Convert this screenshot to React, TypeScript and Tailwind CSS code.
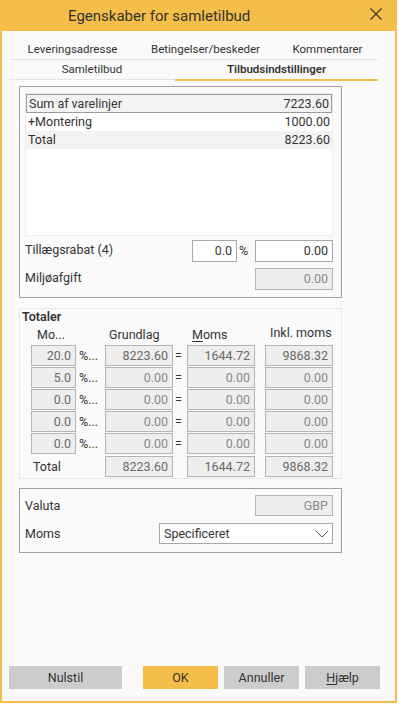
import type { ReactNode } from "react";

const font = { fontFamily: 'Roboto, "Noto Sans", sans-serif' };

function Field({
  value,
  width,
  disabled,
  dim,
}: {
  value: string;
  width: string;
  disabled?: boolean;
  dim?: boolean;
}) {
  return (
    <div
      className={`${width} h-full flex items-center justify-end pr-[4px] border ${
        disabled
          ? "bg-[#eeeeee] border-[#b4b4b4] " + (dim ? "text-[#8a8a8a]" : "text-[#6a6a6a]")
          : "bg-white border-[#a8a8a8] text-[#333]"
      }`}
    >
      {value}
    </div>
  );
}

function Panel({ className, children }: { className: string; children: ReactNode }) {
  return <div className={`ml-[17px] w-[323px] ${className}`}>{children}</div>;
}

const vatRows = [
  { pct: "20.0", base: "8223.60", vat: "1644.72", incl: "9868.32" },
  { pct: "5.0", base: "0.00", vat: "0.00", incl: "0.00" },
  { pct: "0.0", base: "0.00", vat: "0.00", incl: "0.00" },
  { pct: "0.0", base: "0.00", vat: "0.00", incl: "0.00" },
  { pct: "0.0", base: "0.00", vat: "0.00", incl: "0.00" },
];

export default function App() {
  return (
    <div className="w-[399px] h-[704px] bg-[#fafafa]" style={font}>
      <div className="w-[397px] h-[703px] flex flex-col border-x-2 border-b-2 border-[#f5be48] bg-[#fafafa] text-[12.5px] leading-[16px] text-[#333]">
        {/* Title bar */}
        <div className="h-[31px] -mx-[2px] bg-[#f5be48] flex items-center shrink-0">
          <div className="pl-[68px] flex-1 text-[15px] text-[#333]">Egenskaber for samletilbud</div>
          <svg width="12" height="12" viewBox="0 0 12 12" className="mr-[15px] -mt-[3px]">
            <path d="M0.5 0.5 L11.5 11.5 M11.5 0.5 L0.5 11.5" stroke="#333" strokeWidth="1.1" fill="none" />
          </svg>
        </div>

        {/* Tabs */}
        <div className="ml-[9px] w-[367px] h-[29px] pt-[10px] border-b border-[#e6e6e6] grid grid-cols-[123px_143px_1fr] text-center text-[11.5px]">
          <div>Leveringsadresse</div>
          <div>Betingelser/beskeder</div>
          <div>Kommentarer</div>
        </div>
        <div className="ml-[7px] w-[369px] h-[20px] border-b border-[#e6e6e6] grid grid-cols-[166px_1fr] text-center text-[11.5px]">
          <div className="pt-[1px]">Samletilbud</div>
          <div className="pt-[1px] font-semibold h-[21px] border-b-2 border-[#f5be48]">Tilbudsindstillinger</div>
        </div>

        {/* Panel 1 */}
        <Panel className="mt-[6px] h-[212px] border border-[#a0a0a0] pt-[6px] pl-[5px] pr-[8px]">
          <div className="h-[143px] w-[308px] bg-white border border-[#eeeeee]">
            <div className="h-[19px] flex items-center justify-between px-[2px] bg-[#f3f3f3] border border-[#9a9a9a]">
              <span>Sum af varelinjer</span>
              <span>7223.60</span>
            </div>
            <div className="h-[18px] flex items-center justify-between px-[2px]">
              <span>+Montering</span>
              <span>1000.00</span>
            </div>
            <div className="h-[18px] flex items-center justify-between px-[2px] bg-[#f3f3f3]">
              <span>Total</span>
              <span>8223.60</span>
            </div>
          </div>
          <div className="mt-[4px] h-[22px] flex items-center">
            <span className="w-[167px] -mt-[2px]">Tillægsrabat (4)</span>
            <Field value="0.0" width="w-[45px]" />
            <span className="w-[18px] pl-[2px]">%</span>
            <Field value="0.00" width="w-[78px]" />
          </div>
          <div className="mt-[6px] h-[22px] flex items-center">
            <span className="w-[230px] -mt-[2px]">Miljøafgift</span>
            <Field value="0.00" width="w-[78px]" disabled dim />
          </div>
        </Panel>

        {/* Panel 2 */}
        <Panel className="mt-[10px] h-[171px] border border-[#e8e8e8] pl-[2px]">
          <div className="font-semibold">Totaler</div>
          <div className="h-[20px] flex items-center ml-[9px]">
            <span className="w-[74px] pl-[6px]">Mo...</span>
            <span className="w-[82px] pl-[4px]">Grundlag</span>
            <span className="w-[78px] pl-[5px]">
              <span className="underline underline-offset-2">M</span>oms
            </span>
            <span className="w-[68px] pl-[5px] -mt-[4px]">Inkl. moms</span>
          </div>
          <div className="ml-[9px] flex flex-col gap-[1px]">
            {vatRows.map((r, i) => (
              <div key={i} className="h-[21px] flex items-center">
                <Field value={r.pct} width="w-[45px]" disabled />
                <span className="w-[29px] pl-[3px]">%...</span>
                <Field value={r.base} width="w-[68px]" disabled dim={i > 0} />
                <span className="w-[14px] pl-[2px]">=</span>
                <Field value={r.vat} width="w-[68px]" disabled dim={i > 0} />
                <span className="w-[10px]" />
                <Field value={r.incl} width="w-[68px]" disabled dim={i > 0} />
              </div>
            ))}
            <div className="h-[21px] mt-[1px] flex items-center">
              <span className="w-[74px] pl-[2px]">Total</span>
              <Field value="8223.60" width="w-[68px]" disabled />
              <span className="w-[14px]" />
              <Field value="1644.72" width="w-[68px]" disabled />
              <span className="w-[10px]" />
              <Field value="9868.32" width="w-[68px]" disabled />
            </div>
          </div>
        </Panel>

        {/* Panel 3 */}
        <Panel className="mt-[9px] h-[65px] border border-[#a0a0a0] pt-[6px] pl-[5px]">
          <div className="h-[21px] flex items-center">
            <span className="w-[230px]">Valuta</span>
            <Field value="GBP" width="w-[78px]" disabled dim />
          </div>
          <div className="mt-[7px] h-[21px] flex items-center">
            <span className="w-[134px]">Moms</span>
            <div className="w-[174px] h-full bg-white border border-[#a8a8a8] flex items-center justify-between pl-[4px] pr-[3px]">
              <span>Specificeret</span>
              <svg width="14" height="8" viewBox="0 0 14 8">
                <path d="M1 1 L7 7 L13 1" stroke="#555" strokeWidth="1" fill="none" />
              </svg>
            </div>
          </div>
        </Panel>

        {/* Buttons */}
        <div className="mt-auto mb-[12px] h-[23px] flex">
          <button className="ml-[7px] w-[113px] h-full bg-[#cccccc] text-[#333]">Nulstil</button>
          <button className="ml-[21px] w-[75px] h-full bg-[#f5be48] text-[#333]">OK</button>
          <button className="ml-[6px] w-[75px] h-full bg-[#cccccc] text-[#333]">Annuller</button>
          <button className="ml-[6px] w-[75px] h-full bg-[#cccccc] text-[#333]">
            <span className="underline underline-offset-2">H</span>jælp
          </button>
        </div>
      </div>
    </div>
  );
}
